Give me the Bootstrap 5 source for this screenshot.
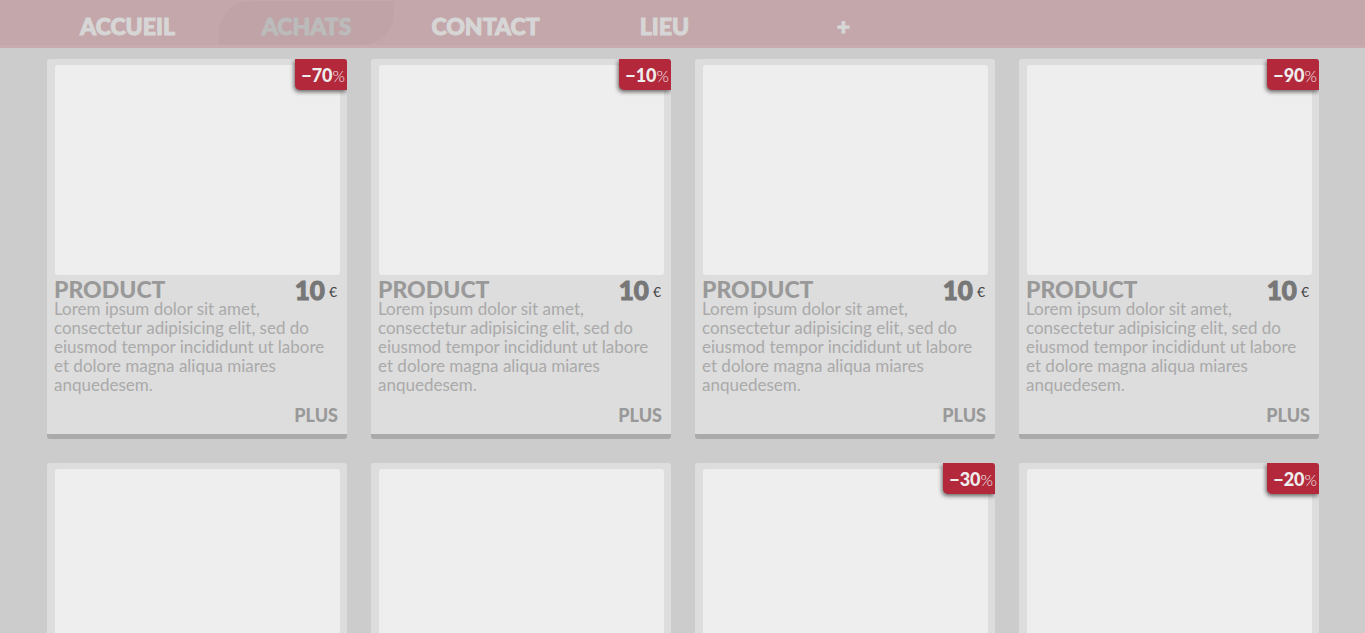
<!DOCTYPE html>
<html lang="fr">
<head>
<meta charset="utf-8">
<meta name="viewport" content="width=device-width, initial-scale=1">
<title>Achats</title>
<link href="https://cdn.jsdelivr.net/npm/bootstrap@5.3.0/dist/css/bootstrap.min.css" rel="stylesheet">
<style>
  body { background: #ccc; font-family: Lato, "Liberation Sans", sans-serif; }
  .topbar { background: #c4a7aa; border-bottom: 3px solid #c9abaf; padding: 1px 40px 0; }
  .topbar .nav { gap: 4px; }
  .topbar .nav-link { width: 175px; height: 44px; padding: 9px 0 0; line-height: 32px; font-size: 23px; font-weight: 900; text-align: center; color: #d7d6d6; -webkit-text-stroke: 1px; }
  .topbar .nav-link.active { background: #bfa3a6; color: #bcbbbb; border-radius: 32px 0 32px 0; }
  .shop { padding: 11px 46px 24px 47px; }
  .product { background: #ddd; border: 0; border-bottom: 5px solid #aaa; border-radius: 3px; padding: 6px 7px 9px 7px; }
  .photo { height: 210px; margin-left: 1px; background: #eee; border-radius: 3px; }
  .product-head { height: 24px; }
  .product-name { font-size: 23px; line-height: 28px; font-weight: 900; color: #999; }
  .price { gap: 4px; font-size: 26px; line-height: 31px; font-weight: 900; color: #777; padding-right: 3px; -webkit-text-stroke: 1px; }
  .price span { font-size: 14px; line-height: 34px; font-weight: 400; color: #444; -webkit-text-stroke: 0; }
  .blurb { font-size: 17px; line-height: 19px; color: #aaa; }
  .more { font-size: 18px; line-height: 20px; font-weight: 900; color: #999; margin: 11px 2px 0 0; }
  .discount { background: #b3283b; color: #eee; border-radius: 0 3px 0 5px; padding: 0 2px 0 6px; height: 31px; line-height: 33px; font-size: 18px; font-weight: 900; box-shadow: -1px 2px 4px #666; clip-path: inset(0 0 -8px -8px); }
  .discount span { font-size: 16px; font-weight: 300; }
</style>
</head>
<body>
<header class="topbar">
  <nav class="nav" aria-label="Menu">
    <a class="nav-link" href="#">ACCUEIL</a>
    <a class="nav-link active" aria-current="page" href="#">ACHATS</a>
    <a class="nav-link" href="#">CONTACT</a>
    <a class="nav-link" href="#">LIEU</a>
    <a class="nav-link" href="#">+</a>
  </nav>
</header>
<main class="shop">
  <div class="row row-cols-1 row-cols-sm-2 row-cols-lg-4 g-4 mt-0" id="products"></div>
</main>
<template id="product-card">
  <div class="col mt-0 mb-4">
    <article class="card product">
      <div class="photo"></div>
      <div class="product-head d-flex justify-content-between">
        <h2 class="product-name m-0">PRODUCT</h2>
        <div class="price d-flex">10<span>€</span></div>
      </div>
      <p class="blurb m-0">Lorem ipsum dolor sit amet,<br>consectetur adipisicing elit, sed do<br>eiusmod tempor incididunt ut labore<br>et dolore magna aliqua miares<br>anquedesem.</p>
      <a class="more align-self-end text-decoration-none" href="#">PLUS</a>
    </article>
  </div>
</template>
<script src="https://cdn.jsdelivr.net/npm/bootstrap@5.3.0/dist/js/bootstrap.bundle.min.js"></script>
<script>
  const discounts = [70, 10, 0, 90, 0, 0, 30, 20];
  const list = document.getElementById('products');
  const template = document.getElementById('product-card');
  discounts.forEach(value => {
    const item = template.content.cloneNode(true);
    if (value) {
      const tag = document.createElement('div');
      tag.className = 'discount position-absolute top-0 end-0';
      tag.innerHTML = `−${value}<span>%</span>`;
      item.querySelector('.product').append(tag);
    }
    list.append(item);
  });
</script>
</body>
</html>
